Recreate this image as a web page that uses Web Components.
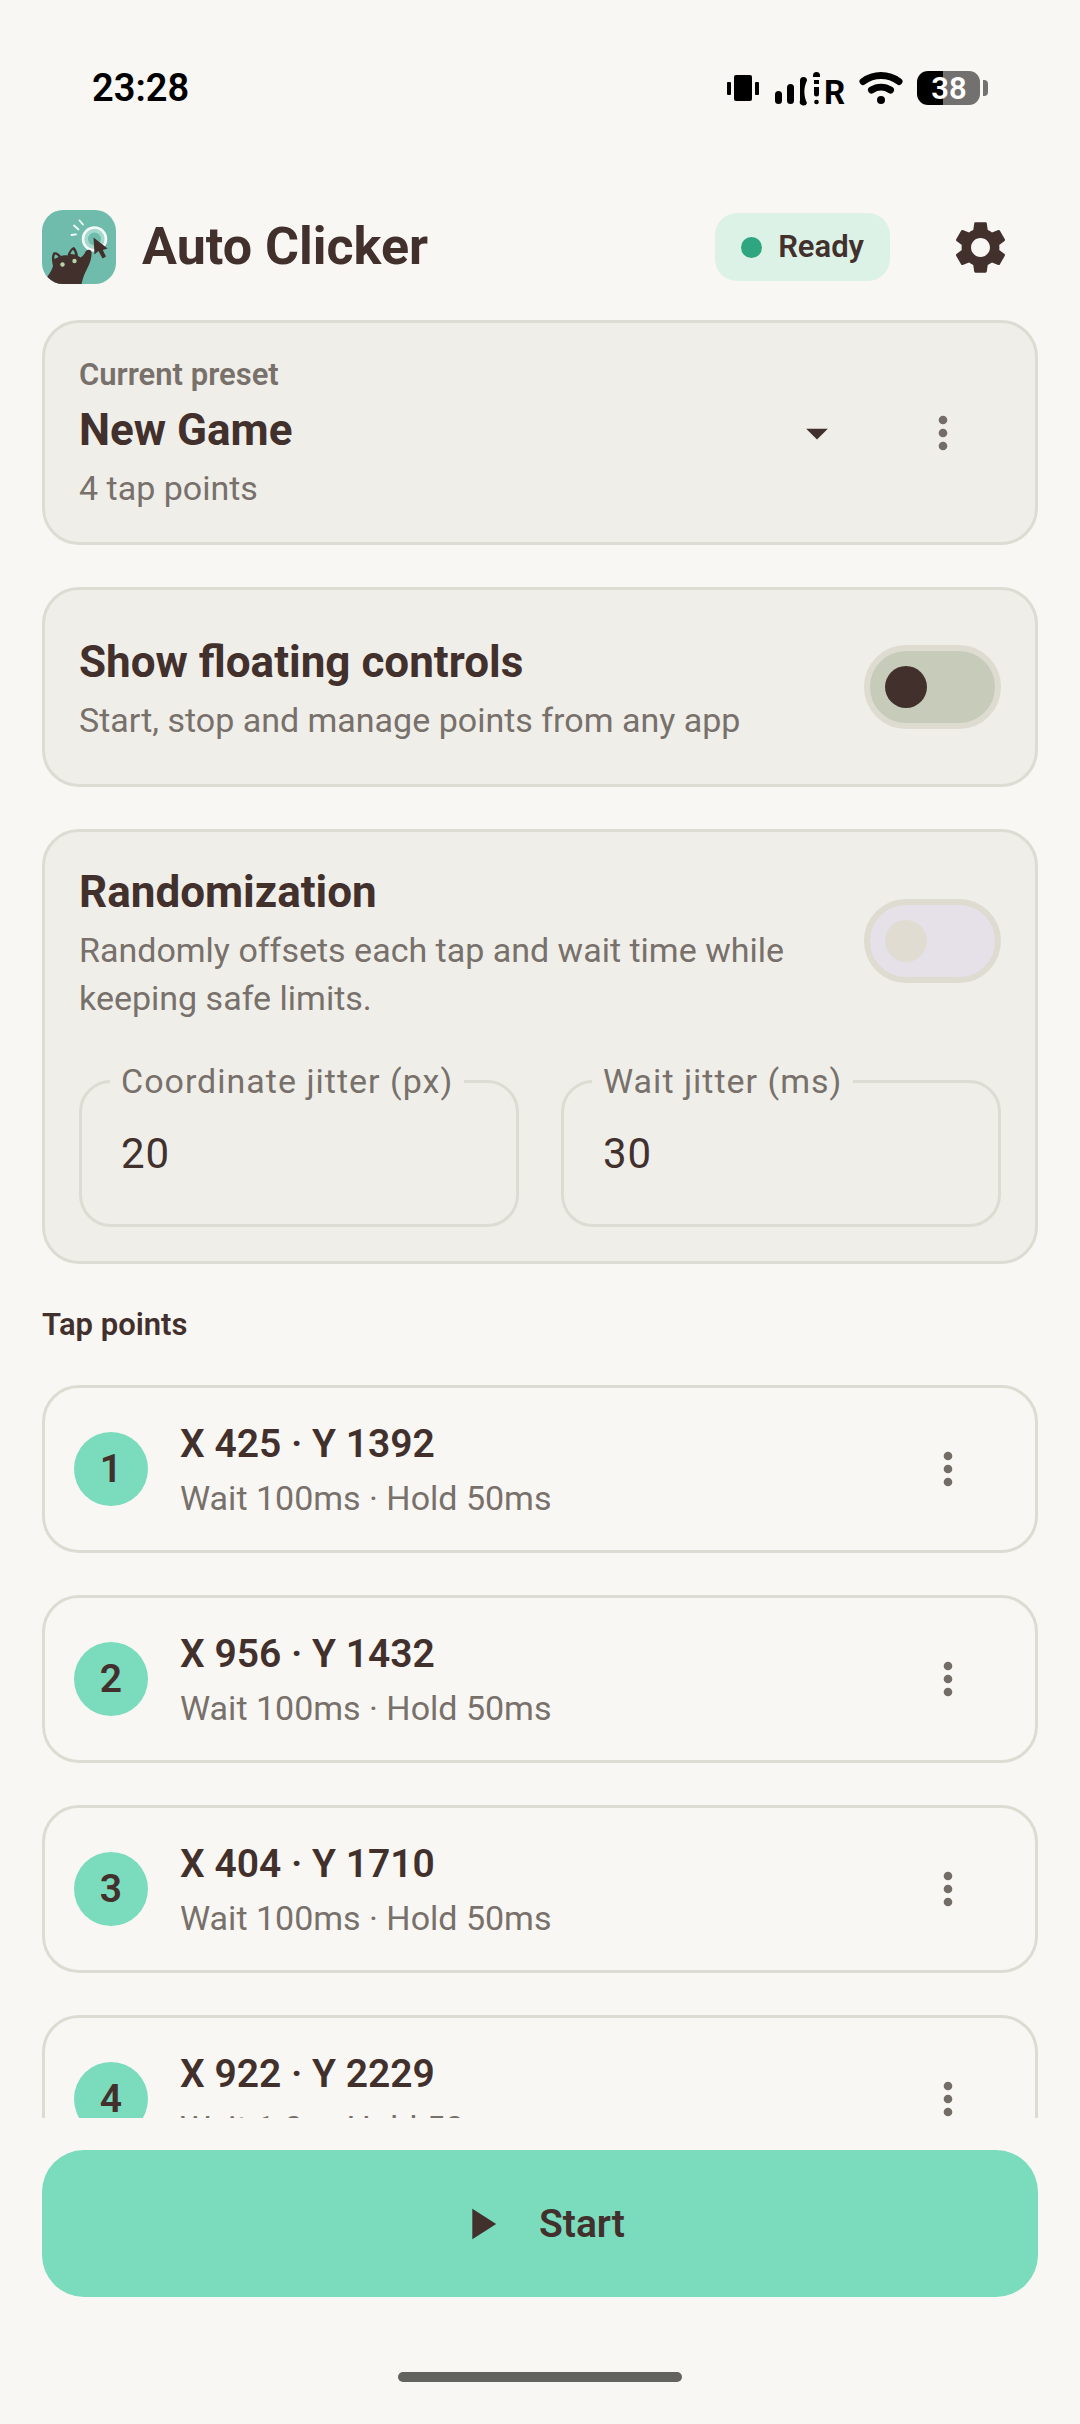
<!DOCTYPE html>
<html lang="en">
<head>
<meta charset="utf-8">
<meta name="viewport" content="width=device-width, initial-scale=1">
<title>Auto Clicker</title>
<style>
  :root {
    --bg: #f9f7f3;
    --surface: #efeee9;
    --line: #dddcd3;
    --text: #42302d;
    --muted: #78706a;
    --accent: #7adbbd;
  }
  body {
    margin: 0;
    background-color: var(--bg);
    color: var(--text);
    font-family: Roboto, "Noto Sans", sans-serif;
  }
</style>
</head>
<body>
<clicker-app></clicker-app>

<script>
const define = (name, html) => {
  const template = document.createElement("template");
  template.innerHTML = html;
  customElements.define(name, class extends HTMLElement {
    constructor() {
      super();
      this.attachShadow({ mode: "open" }).append(template.content.cloneNode(true));
    }
    connectedCallback() {
      // copy plain attributes into the marked nodes
      this.shadowRoot.querySelectorAll("[data-label]").forEach((node) => {
        node.setAttribute("aria-label", this.getAttribute("label") || "");
      });
      this.shadowRoot.querySelectorAll("[data-value]").forEach((node) => {
        node.value = this.getAttribute("value") || "";
      });
      this.shadowRoot.querySelectorAll("[data-disabled]").forEach((node) => {
        node.disabled = this.hasAttribute("disabled");
      });
    }
  });
};

define("phone-status-bar", `
  <style>
    :host {
      display: flex;
      align-items: center;
      justify-content: space-between;
      height: 44px;
      padding: 66px 92px 79px;
      color: #000;
    }
    .time {
      font-size: 38px;
      font-weight: 600;
      line-height: 44px;
    }
    .icons {
      display: flex;
      align-items: center;
      gap: 14px;
    }
    svg {
      display: block;
    }
    text {
      font-family: Roboto, sans-serif;
    }
  </style>
  <span class="time">23:28</span>
  <div class="icons">
    <svg width="34" height="44" viewBox="0 0 34 44" aria-hidden="true">
      <rect x="7" y="9" width="18" height="26" rx="2"/>
      <rect x="0" y="16" width="4" height="13" rx="1"/>
      <rect x="28" y="16" width="4" height="13" rx="1"/>
    </svg>
    <svg width="70" height="44" viewBox="0 0 70 44" aria-hidden="true">
      <rect x="0" y="25" width="7" height="13" rx="3.5"/>
      <rect x="12" y="18" width="7" height="20" rx="3.5"/>
      <path d="M25 14.5a3.5 3.5 0 0 1 7 0c-3.5 7-3.500 15 0 22.500a3.500 3.500 0 0 1-7-2.500z"/>
      <path d="M38 9.500a3.500 3.500 0 0 1 7 0v1.500h-7zM39 14h5v4h-5zM39 21h5v7a2.500 2.500 0 0 1-5 0z"/>
      <circle cx="41.500" cy="36" r="2.300"/>
      <text x="49" y="38" font-size="33" font-weight="700">R</text>
    </svg>
    <svg width="44" height="44" viewBox="0 0 44 44" fill="none" stroke="#000" stroke-linecap="round" aria-hidden="true">
      <path d="M4 15.500a30 30 0 0 1 36 0" stroke-width="7"/>
      <path d="M12.500 24a17.500 17.500 0 0 1 19 0" stroke-width="7"/>
      <circle cx="22" cy="34" r="4" fill="#000" stroke="none"/>
    </svg>
    <svg width="71" height="44" viewBox="0 0 71 44" aria-hidden="true">
      <path d="M11 5h16v34H11A11 11 0 0 1 0 28V16A11 11 0 0 1 11 5z"/>
      <path d="M26 5h26a11 11 0 0 1 11 11v12a11 11 0 0 1-11 11H26z" fill="#73716f"/>
      <path d="M66 14h1q4 0 4 4v8q0 4-4 4h-1z" fill="#73716f"/>
      <text x="32" y="33" font-size="31" font-weight="600" fill="#fff" text-anchor="middle">38</text>
    </svg>
  </div>
`);

define("app-logo", `
  <style>
    :host {
      display: block;
      width: 74px;
      height: 74px;
      border-radius: 21px;
      overflow: hidden;
    }
    svg {
      display: block;
      width: 100%;
      height: 100%;
    }
  </style>
  <svg viewBox="0 0 74 74" aria-hidden="true">
    <rect width="74" height="74" fill="#6fbcac"/>
    <circle cx="52.500" cy="29" r="11.500" fill="#a5d9cc" stroke="#f5fbf9" stroke-width="2.600"/>
    <circle cx="52.500" cy="29" r="6.500" fill="#6fbcac"/>
    <path d="M37.500 10.500l3.500 4M32 15.500l4.500 4M29.500 25l4.500-.6" stroke="#f5fbf9" stroke-width="1.800" stroke-linecap="round" fill="none"/>
    <path d="M51.500 27.500l1 17 4-3.500 4 7.500 3.500-2-3.200-6.500 4.800-1.500z" fill="#42302d"/>
    <path d="M5 67c3-4 5-7 6-11-1-5-2-10 .5-13.500 3-1 6 1.500 7.500 3.500 2-1 4-1 6.500-.5 1-4 4-8 6.500-8.500 2.500 2 3.500 6 4 9 1 .5 2 1 2.500 1.500 3-1.500 4-4 5.500-6.500 2-2 5-1.500 5.500 1 .5 8-3 14-6 20-2 4-3 8-4 12H12z" fill="#42302d"/>
    <path d="M12.500 49c-.5-2 0-4 1-4.500 1 0 2.500 1.500 3 2.500zM28.500 44c.5-2 1.500-3.500 2.500-4 1 .5 1.800 2.500 2 4.500z" fill="#6fbcac"/>
    <circle cx="20.500" cy="54.500" r="2.200" fill="#b9d3ab"/>
    <circle cx="32.500" cy="51" r="2.200" fill="#b9d3ab"/>
  </svg>
`);

define("status-chip", `
  <style>
    :host {
      display: flex;
      align-items: center;
      gap: 16px;
      padding: 12px 26px;
      border-radius: 22px;
      background-color: #dcf2e7;
      font-size: 31px;
      font-weight: 600;
      line-height: 44px;
    }
    .dot {
      width: 21px;
      height: 21px;
      border-radius: 50%;
      background-color: #2fa680;
    }
  </style>
  <span class="dot"></span>
  <slot></slot>
`);

define("icon-button", `
  <style>
    :host {
      display: block;
      flex: none;
    }
    button {
      display: flex;
      align-items: center;
      justify-content: center;
      width: 116px;
      height: 116px;
      padding: 0;
      border: none;
      border-radius: 50%;
      background: none;
      color: inherit;
      cursor: pointer;
    }
  </style>
  <button type="button" data-label><slot></slot></button>
`);

define("more-button", `
  <style>
    :host {
      display: block;
      flex: none;
      color: #736c67;
    }
    svg {
      display: block;
    }
  </style>
  <icon-button label="More options">
    <svg width="52" height="52" viewBox="0 0 24 24" fill="currentColor" aria-hidden="true">
      <path d="M12 8c1.100 0 2-.9 2-2s-.9-2-2-2-2 .9-2 2 .9 2 2 2zm0 2c-1.100 0-2 .9-2 2s.9 2 2 2 2-.9 2-2-.9-2-2-2zm0 6c-1.100 0-2 .9-2 2s.9 2 2 2 2-.9 2-2-.9-2-2-2z"/>
    </svg>
  </icon-button>
`);

define("app-header", `
  <style>
    :host {
      display: flex;
      align-items: center;
      padding: 0 42px 15px;
    }
    h1 {
      flex: 1;
      margin: 0 0 0 26px;
      font-size: 52px;
      font-weight: 700;
      line-height: 64px;
    }
    icon-button {
      margin-left: 32px;
    }
    svg {
      display: block;
    }
  </style>
  <app-logo></app-logo>
  <h1>Auto Clicker</h1>
  <status-chip>Ready</status-chip>
  <icon-button label="Settings">
    <svg width="63" height="63" viewBox="0 0 24 24" fill="currentColor" aria-hidden="true">
      <path d="M19.140 12.940c.04-.3.060-.61.060-.94 0-.32-.02-.64-.07-.94l2.030-1.580c.18-.14.230-.41.120-.61l-1.920-3.320c-.12-.22-.37-.29-.59-.22l-2.390.96c-.5-.38-1.030-.7-1.620-.94l-.36-2.540c-.04-.24-.24-.41-.48-.41h-3.840c-.24 0-.43.170-.47.410l-.36 2.540c-.59.240-1.130.570-1.620.940l-2.390-.96c-.22-.08-.47 0-.59.220L2.740 8.870c-.12.210-.08.470.120.610l2.030 1.580c-.05.3-.09.630-.09.940s.02.640.070.940l-2.030 1.580c-.18.140-.23.410-.12.610l1.920 3.320c.12.220.37.290.59.220l2.390-.96c.5.380 1.030.7 1.620.94l.36 2.540c.05.240.240.410.480.410h3.840c.24 0 .44-.17.470-.41l.36-2.540c.59-.24 1.130-.56 1.620-.94l2.390.96c.22.080.470 0 .59-.22l1.920-3.320c.12-.22.070-.47-.12-.61l-2.010-1.580zM12 15.600c-1.980 0-3.600-1.620-3.600-3.600s1.620-3.600 3.600-3.600 3.600 1.620 3.600 3.600-1.620 3.600-3.600 3.600z"/>
    </svg>
  </icon-button>
`);

define("surface-card", `
  <style>
    :host {
      display: block;
      padding: 30px 34px;
      border: 3px solid var(--line);
      border-radius: 37px;
      background-color: var(--surface);
    }
  </style>
  <slot></slot>
`);

define("preset-picker", `
  <style>
    :host {
      display: grid;
      grid-template-columns: 1fr 52px 116px;
      column-gap: 42px;
      align-items: center;
    }
    label {
      grid-area: 1 / 1;
      color: var(--muted);
      font-size: 31px;
      font-weight: 600;
      line-height: 44px;
    }
    select {
      grid-area: 2 / 1 / 3 / 3;
      height: 67px;
      margin: 0;
      padding: 0;
      border: none;
      appearance: none;
      background: none;
      color: inherit;
      font: 700 44px/67px Roboto, sans-serif;
      cursor: pointer;
    }
    .count {
      grid-area: 3 / 1;
      color: var(--muted);
      font-size: 34px;
      line-height: 48px;
    }
    svg {
      grid-area: 1 / 2 / 4 / 3;
      pointer-events: none;
    }
    more-button {
      grid-area: 1 / 3 / 4 / 4;
    }
  </style>
  <label for="preset">Current preset</label>
  <select id="preset"><option>New Game</option></select>
  <span class="count"><slot></slot></span>
  <svg width="52" height="52" viewBox="0 0 24 24" fill="currentColor" aria-hidden="true"><path d="M7 10l5 5 5-5z"/></svg>
  <more-button></more-button>
`);

define("setting-switch", `
  <style>
    :host {
      display: flex;
      align-items: center;
      gap: 42px;
    }
    label {
      flex: 1;
    }
    .title {
      display: block;
      font-size: 44px;
      font-weight: 700;
      line-height: 67px;
    }
    .hint {
      display: block;
      color: var(--muted);
      font-size: 34px;
      line-height: 48px;
    }
    input {
      flex: none;
      display: flex;
      align-items: center;
      box-sizing: border-box;
      width: 137px;
      height: 84px;
      margin: 0;
      padding: 0 15px;
      border: 6px solid #dedcd1;
      border-radius: 42px;
      appearance: none;
      background-color: #c7cbb9;
    }
    input::before {
      content: "";
      width: 42px;
      height: 42px;
      border-radius: 50%;
      background-color: var(--text);
    }
    input:checked {
      justify-content: flex-end;
      background-color: var(--accent);
    }
    input:disabled {
      background-color: #e6e0e8;
    }
    input:disabled::before {
      background-color: #e0dcd1;
    }
  </style>
  <label for="toggle">
    <span class="title"><slot name="title"></slot></span>
    <span class="hint"><slot></slot></span>
  </label>
  <input id="toggle" type="checkbox" role="switch" data-disabled>
`);

define("outlined-field", `
  <style>
    :host {
      display: block;
      flex: 1;
    }
    fieldset {
      min-width: 0;
      margin: 0;
      padding: 0 28px 20px;
      border: 3px solid var(--line);
      border-radius: 32px;
    }
    legend {
      padding: 0 11px;
      color: var(--muted);
      font-size: 34px;
      line-height: 41px;
      letter-spacing: 1px;
    }
    input {
      display: block;
      box-sizing: border-box;
      width: 100%;
      height: 102px;
      padding: 0 11px;
      border: none;
      outline: none;
      background: none;
      color: inherit;
      font: 42px Roboto, sans-serif;
      letter-spacing: 1px;
    }
  </style>
  <fieldset>
    <legend><label for="field"><slot></slot></label></legend>
    <input id="field" type="text" inputmode="numeric" data-value>
  </fieldset>
`);

define("tap-point", `
  <style>
    :host {
      display: flex;
      align-items: center;
      height: 110px;
      padding: 26px 29px;
      border: 3px solid var(--line);
      border-radius: 37px;
    }
    .badge {
      flex: none;
      width: 74px;
      margin-right: 32px;
      border-radius: 50%;
      background-color: var(--accent);
      font-size: 39px;
      font-weight: 600;
      line-height: 74px;
      text-align: center;
    }
    .text {
      flex: 1;
    }
    .position {
      font-size: 39px;
      font-weight: 600;
      line-height: 58px;
    }
    .timing {
      color: var(--muted);
      font-size: 34px;
      line-height: 50px;
    }
  </style>
  <div class="badge"><slot name="number"></slot></div>
  <div class="text">
    <div class="position"><slot name="position"></slot></div>
    <div class="timing"><slot></slot></div>
  </div>
  <more-button></more-button>
`);

define("start-bar", `
  <style>
    :host {
      display: block;
      padding: 32px 42px 75px;
    }
    button {
      display: flex;
      align-items: center;
      justify-content: center;
      gap: 32px;
      width: 100%;
      height: 147px;
      border: none;
      border-radius: 42px;
      background-color: var(--accent);
      color: var(--text);
      font: 600 39px Roboto, sans-serif;
      cursor: pointer;
    }
  </style>
  <button type="button">
    <svg width="52" height="52" viewBox="0 0 24 24" fill="currentColor" aria-hidden="true"><path d="M8 5v14l11-7z"/></svg>
    <slot></slot>
  </button>
`);

define("home-handle", `
  <style>
    :host {
      display: block;
      width: 284px;
      height: 10px;
      margin: 0 auto 42px;
      border-radius: 5px;
      background-color: #62625f;
    }
  </style>
`);

define("clicker-app", `
  <style>
    :host {
      display: flex;
      flex-direction: column;
      height: 100vh;
    }
    phone-status-bar, app-header, start-bar, home-handle {
      flex: none;
    }
    main {
      flex: 1;
      display: flex;
      flex-direction: column;
      gap: 42px;
      min-height: 0;
      padding: 0 42px;
      overflow-y: auto;
      scrollbar-width: none;
    }
    main > * {
      flex: none;
    }
    .controls {
      padding: 39px 34px 40px;
    }
    .random {
      padding: 27px 34px 34px;
    }
    .fields {
      display: flex;
      gap: 42px;
      margin-top: 39px;
    }
    h2 {
      margin: 0;
      font-size: 31px;
      font-weight: 600;
      line-height: 37px;
    }
  </style>
  <phone-status-bar></phone-status-bar>
  <app-header></app-header>
  <main>
    <surface-card>
      <preset-picker>4 tap points</preset-picker>
    </surface-card>
    <surface-card class="controls">
      <setting-switch>
        <span slot="title">Show floating controls</span>
        Start, stop and manage points from any app
      </setting-switch>
    </surface-card>
    <surface-card class="random">
      <setting-switch disabled>
        <span slot="title">Randomization</span>
        Randomly offsets each tap and wait time while keeping safe limits.
      </setting-switch>
      <div class="fields">
        <outlined-field value="20">Coordinate jitter (px)</outlined-field>
        <outlined-field value="30">Wait jitter (ms)</outlined-field>
      </div>
    </surface-card>
    <h2>Tap points</h2>
    <tap-point><span slot="number">1</span><span slot="position">X 425 · Y 1392</span>Wait 100ms · Hold 50ms</tap-point>
    <tap-point><span slot="number">2</span><span slot="position">X 956 · Y 1432</span>Wait 100ms · Hold 50ms</tap-point>
    <tap-point><span slot="number">3</span><span slot="position">X 404 · Y 1710</span>Wait 100ms · Hold 50ms</tap-point>
    <tap-point><span slot="number">4</span><span slot="position">X 922 · Y 2229</span>Wait 1.0s · Hold 50ms</tap-point>
  </main>
  <start-bar>Start</start-bar>
  <home-handle></home-handle>
`);
</script>
</body>
</html>
